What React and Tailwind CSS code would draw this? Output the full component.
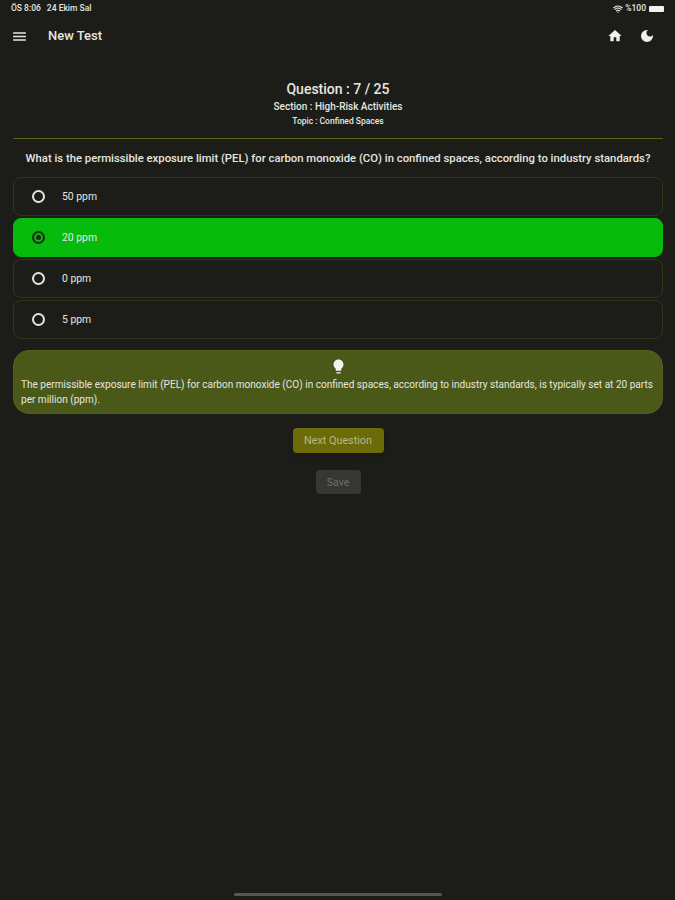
import { Wifi } from 'lucide-react';

const options = [
    { label: '50 ppm', selected: false },
    { label: '20 ppm', selected: true },
    { label: '0 ppm', selected: false },
    { label: '5 ppm', selected: false },
];

const RadioDot = ({ selected }) => (
    <span className={`flex items-center justify-center w-[13px] h-[13px] rounded-full border-2 ${selected ? 'border-[#1c2a14]' : 'border-[#e6e6e0]'}`}>
        {selected && <span className="w-[5px] h-[5px] rounded-full bg-[#1c2a14]"></span>}
    </span>
);

const MenuIcon = () => (
    <svg width="17" height="17" viewBox="0 0 24 24" fill="#e6e6e0" className="-ml-px">
        <path d="M3 18h18v-2H3v2zm0-5h18v-2H3v2zm0-7v2h18V6H3z" />
    </svg>
);

const HomeIcon = () => (
    <svg width="16" height="16" viewBox="0 0 24 24" fill="#f0f0f0">
        <path d="M10 20v-6h4v6h5v-8h3L12 3 2 12h3v8z" />
    </svg>
);

const MoonIcon = () => (
    <svg width="16" height="16" viewBox="0 0 24 24" fill="#f0f0f0">
        <path d="M12 3a9 9 0 1 0 9 9c0-.46-.04-.92-.1-1.36a5.39 5.39 0 0 1-4.4 2.26 5.4 5.4 0 0 1-3.14-9.8c-.44-.06-.9-.1-1.36-.1z" />
    </svg>
);

const BulbIcon = () => (
    <svg width="17" height="17" viewBox="0 0 24 24" fill="#f5f5f0" className="shrink-0">
        <path d="M9 21c0 .5.4 1 1 1h4c.6 0 1-.5 1-1v-1H9v1zm3-19C8.1 2 5 5.1 5 9c0 2.4 1.2 4.5 3 5.7V17c0 .5.4 1 1 1h6c.6 0 1-.5 1-1v-2.3c1.8-1.3 3-3.4 3-5.7 0-3.9-3.1-7-7-7z" />
    </svg>
);

const App = () => {
    return (
        <div className="relative w-[675px] h-[900px] overflow-hidden bg-[#1c1d19] text-[#e6e6e0] font-['Roboto',sans-serif]">
            {/* status bar */}
            <div className="flex items-center justify-between h-4 pl-[11px] pr-[11px] pt-px text-[8.5px] font-medium">
                <div className="flex gap-[6px]">
                    <span>ÖS 8:06</span>
                    <span>24 Ekim Sal</span>
                </div>
                <div className="flex items-center gap-[2px]">
                    <Wifi size={10} strokeWidth={3} />
                    <span>%100</span>
                    <span className="w-[15px] h-[6px] ml-px rounded-[1px] bg-[#f2f2f2]"></span>
                </div>
            </div>

            {/* toolbar */}
            <div className="flex items-center h-10 pl-3 pr-[20px]">
                <MenuIcon />
                <span className="ml-[20px] text-[13px] font-medium">New Test</span>
                <div className="flex items-center gap-[16px] ml-auto">
                    <HomeIcon />
                    <MoonIcon />
                </div>
            </div>

            <div className="pl-[13px] pr-[12px]">
                <div className="flex flex-col items-center pt-[24px]">
                    <h1 className="text-[14px] leading-[18px] font-medium">Question : 7 / 25</h1>
                    <p className="mt-[2px] text-[10px] leading-[14px] font-medium">Section : High-Risk Activities</p>
                    <p className="text-[8.5px] leading-[14px] font-medium">Topic : Confined Spaces</p>
                </div>

                <div className="h-px mt-[10px] bg-[#5f6115]"></div>

                <p className="mt-[12px] text-center text-[11.3px] leading-[16px] font-medium whitespace-nowrap">
                    What is the permissible exposure limit (PEL) for carbon monoxide (CO) in confined spaces, according to industry standards?
                </p>

                <div className="flex flex-col gap-[2px] mt-[10px]">
                    {options.map((opt) => (
                        <div
                            key={opt.label}
                            className={`flex items-center h-[39px] pl-[18px] rounded-lg border text-[10.4px] ${opt.selected ? 'bg-[#06bb0c] border-[#06bb0c]' : 'border-[#32341b]'}`}
                        >
                            <RadioDot selected={opt.selected} />
                            <span className="ml-[17px]">{opt.label}</span>
                        </div>
                    ))}
                </div>

                <div className="flex flex-col items-center mt-[11px] h-[64px] pl-[7px] pr-[6px] pt-[7px] rounded-2xl bg-[#4a5818] border border-[#55601f]">
                    <BulbIcon />
                    <p className="w-full mt-[2px] text-[10.05px] leading-[15px]">
                        The permissible exposure limit (PEL) for carbon monoxide (CO) in confined spaces, according to industry standards, is typically set at 20 parts per million (ppm).
                    </p>
                </div>

                <div className="flex flex-col items-center mt-[14px]">
                    <button className="w-[91px] h-[25px] pt-px rounded bg-[#6b6b08] text-[#b9b98c] text-[10.8px] shadow-md">Next Question</button>
                    <button className="w-[45px] h-[24px] pt-px mt-[17px] rounded bg-[#363734] text-[#6e6e6a] text-[10.5px]">Save</button>
                </div>
            </div>

            {/* gesture bar */}
            <div className="absolute left-[234px] bottom-[4px] w-[208px] h-[3px] rounded-full bg-[#575852]"></div>
        </div>
    );
};

export default App;
